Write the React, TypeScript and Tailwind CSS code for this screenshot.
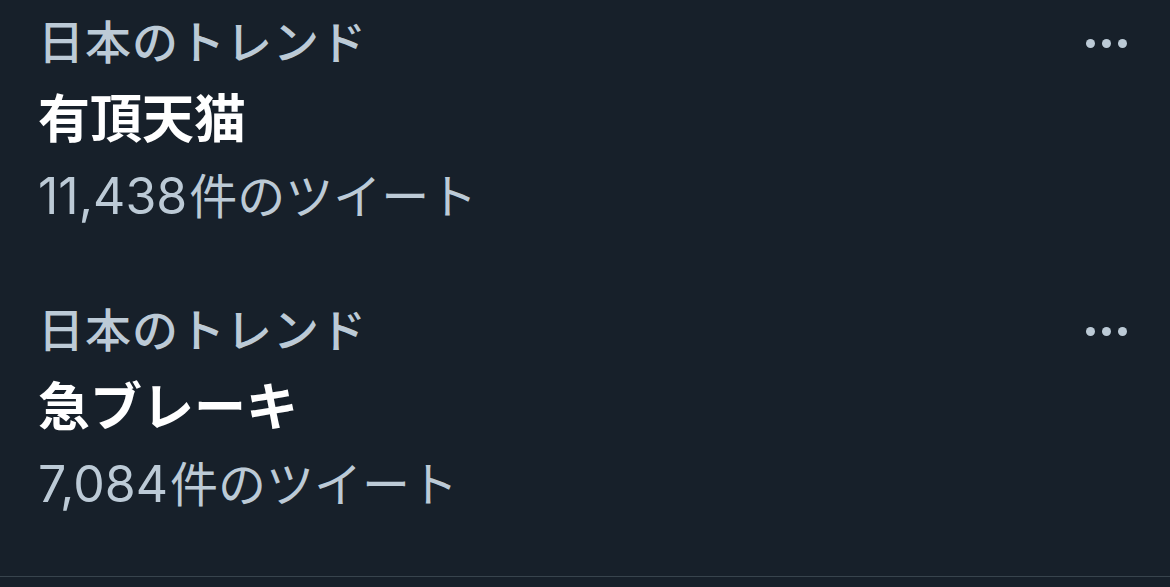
const trends = [
  { label: "日本のトレンド", title: "有頂天猫", count: "11,438" },
  { label: "日本のトレンド", title: "急ブレーキ", count: "7,084" },
];

function MoreDots() {
  return (
    <div className="flex h-fit self-start items-center gap-[7px] pt-[25px]">
      <span className="block h-[9px] w-[9px] rounded-full bg-[#bccad6]" />
      <span className="block h-[9px] w-[9px] rounded-full bg-[#bccad6]" />
      <span className="block h-[9px] w-[9px] rounded-full bg-[#bccad6]" />
    </div>
  );
}

export default function App() {
  return (
    <div
      className="h-[587px] w-full overflow-hidden bg-[#17202a]"
      style={{ fontFamily: '"Inter", "Noto Sans CJK JP", sans-serif' }}
    >
      <div className="border-b border-[#38444d]">
        {trends.map((t, i) => (
          <div key={i} className="flex justify-between pl-[38px] pr-[43px] pt-[14px] pb-[63px]">
            <div className="flex flex-col">
              <div className="text-[46px] font-medium leading-[56px] text-[#bccad6] tracking-[1px]">{t.label}</div>
              <div className="mt-[18px] text-[52px] font-bold leading-[64px] text-white">{t.title}</div>
              <div className="mt-[16px] flex items-baseline text-[48px] leading-[56px] text-[#bccad6]">
                <span className="text-[50px]">{t.count}</span>
                <span className="ml-[2px]">件のツイート</span>
              </div>
            </div>
            <MoreDots />
          </div>
        ))}
      </div>
    </div>
  );
}
